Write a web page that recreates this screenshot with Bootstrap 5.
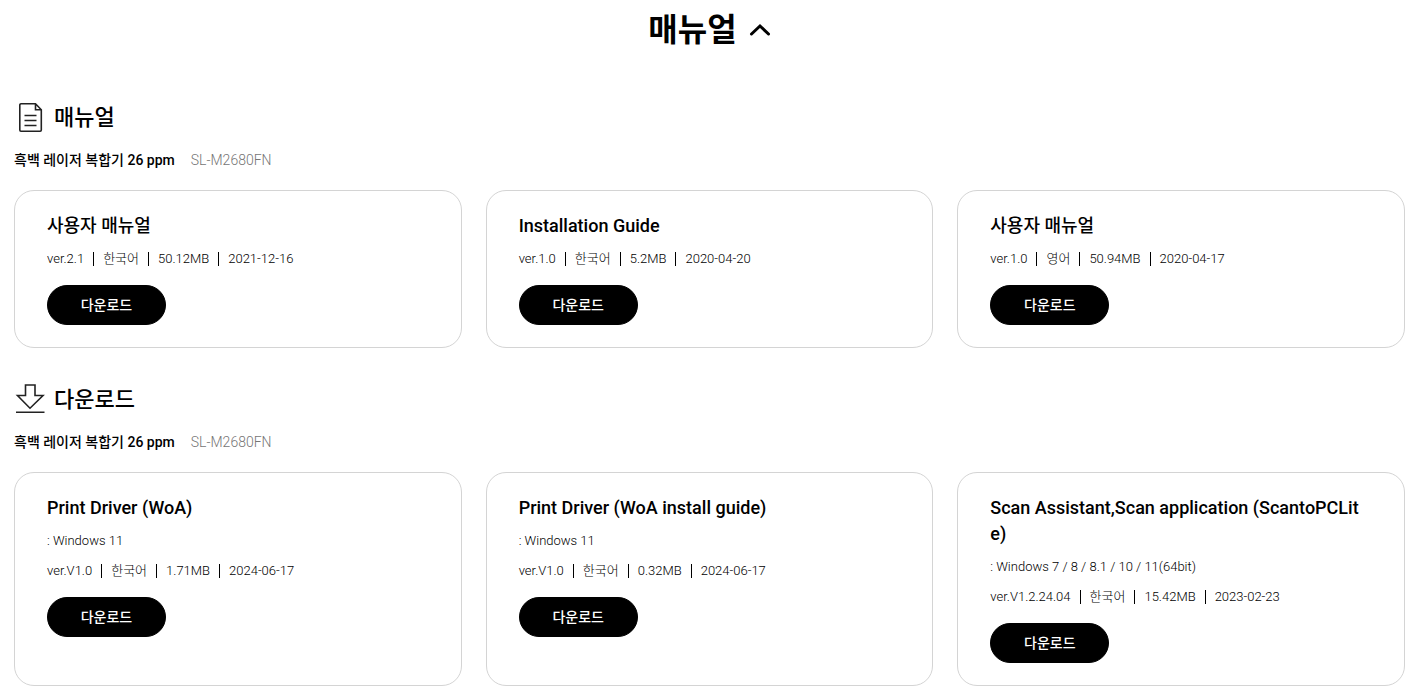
<!DOCTYPE html>
<html lang="ko">
<head>
<meta charset="utf-8">
<meta name="viewport" content="width=device-width, initial-scale=1">
<title>매뉴얼</title>
<link href="https://cdn.jsdelivr.net/npm/bootstrap@5.3.0/dist/css/bootstrap.min.css" rel="stylesheet">
<style>
  body { font-family: Roboto, "Noto Sans CJK KR", sans-serif; color: #000; font-size: 14px; line-height: 20px; }
  .support { padding: 4px 16px 12px 14px; }
  .fold-toggle { font-size: 32px; line-height: 44px; gap: 12px; }
  .manuals { margin-top: 50px; }
  .downloads { margin-top: 36px; }
  .section-title { font-size: 22px; line-height: 32px; font-weight: 500; }
  .product { font-size: 14px; line-height: 20px; margin: 16px 0 20px; }
  .product strong { font-weight: 500; }
  .product span { color: #757575; font-weight: 300; }
  .file-card { border: 1px solid #d4d4d4; border-radius: 20px; padding: 22px 32px; }
  .file-name { font-size: 18px; line-height: 26px; font-weight: 500; word-break: break-all; }
  .file-line { font-size: 13px; line-height: 20px; font-weight: 300; margin: 10px 0 0; }
  .file-line li + li { border-left: 1px solid #000; margin-left: 9px; padding-left: 9px; line-height: 14px; }
  .btn-download { --bs-btn-font-size: 14px; --bs-btn-font-weight: 500; --bs-btn-line-height: 20px;
    --bs-btn-padding-x: 32px; --bs-btn-padding-y: 9px;
    --bs-btn-color: #fff; --bs-btn-bg: #000; --bs-btn-border-color: #000;
    --bs-btn-hover-color: #fff; --bs-btn-hover-bg: #333; min-width: 119px; margin-top: 16px; }
</style>
</head>
<body>
<main class="support">
  <h1 class="text-center m-0">
    <button type="button" class="fold-toggle btn border-0 p-0 fw-bold d-inline-flex align-items-center text-black" aria-expanded="true">매뉴얼
      <svg width="22" height="14" viewBox="0 0 22 14" fill="none" stroke="#000" stroke-width="3" stroke-linecap="round" aria-hidden="true"><path d="M2.500 11 11 3l8.500 8"/></svg>
    </button>
  </h1>

  <section class="manuals">
    <h2 class="section-title d-flex align-items-center gap-2 m-0">
      <svg width="32" height="32" viewBox="0 0 32 32" fill="none" stroke="#222" stroke-width="1.6" aria-hidden="true"><path d="M7 1.800h14.500l5.800 6V28a1.200 1.200 0 0 1-1.200 1.200H7A1.200 1.200 0 0 1 5.800 28V3A1.200 1.200 0 0 1 7 1.800zM21.500 1.800v6h6M10.500 13.500h12M10.500 18.500h12M10.500 23.500h12"/></svg>
      매뉴얼
    </h2>
    <p class="product d-flex gap-3"><strong>흑백 레이저 복합기 26 ppm</strong><span>SL-M2680FN</span></p>
    <div class="row gx-4">
      <div class="col-4"><article class="file-card h-100">
        <h3 class="file-name m-0">사용자 매뉴얼</h3>
        <ul class="file-line list-unstyled d-flex align-items-center"><li>ver.2.1</li><li>한국어</li><li>50.12MB</li><li>2021-12-16</li></ul>
        <button type="button" class="btn btn-download rounded-pill">다운로드</button>
      </article></div>
      <div class="col-4"><article class="file-card h-100">
        <h3 class="file-name m-0">Installation Guide</h3>
        <ul class="file-line list-unstyled d-flex align-items-center"><li>ver.1.0</li><li>한국어</li><li>5.2MB</li><li>2020-04-20</li></ul>
        <button type="button" class="btn btn-download rounded-pill">다운로드</button>
      </article></div>
      <div class="col-4"><article class="file-card h-100">
        <h3 class="file-name m-0">사용자 매뉴얼</h3>
        <ul class="file-line list-unstyled d-flex align-items-center"><li>ver.1.0</li><li>영어</li><li>50.94MB</li><li>2020-04-17</li></ul>
        <button type="button" class="btn btn-download rounded-pill">다운로드</button>
      </article></div>
    </div>
  </section>

  <section class="downloads">
    <h2 class="section-title d-flex align-items-center gap-2 m-0">
      <svg width="32" height="32" viewBox="0 0 32 32" fill="none" stroke="#222" stroke-width="1.6" aria-hidden="true"><path d="M11.500 1h9.500v10.500h8L16 24.200 3.500 11.500h8zM2 28.200h28.500"/></svg>
      다운로드
    </h2>
    <p class="product d-flex gap-3"><strong>흑백 레이저 복합기 26 ppm</strong><span>SL-M2680FN</span></p>
    <div class="row gx-4">
      <div class="col-4"><article class="file-card h-100">
        <h3 class="file-name m-0">Print Driver (WoA)</h3>
        <p class="file-line">: Windows 11</p>
        <ul class="file-line list-unstyled d-flex align-items-center"><li>ver.V1.0</li><li>한국어</li><li>1.71MB</li><li>2024-06-17</li></ul>
        <button type="button" class="btn btn-download rounded-pill">다운로드</button>
      </article></div>
      <div class="col-4"><article class="file-card h-100">
        <h3 class="file-name m-0">Print Driver (WoA install guide)</h3>
        <p class="file-line">: Windows 11</p>
        <ul class="file-line list-unstyled d-flex align-items-center"><li>ver.V1.0</li><li>한국어</li><li>0.32MB</li><li>2024-06-17</li></ul>
        <button type="button" class="btn btn-download rounded-pill">다운로드</button>
      </article></div>
      <div class="col-4"><article class="file-card h-100">
        <h3 class="file-name m-0">Scan Assistant,Scan application (ScantoPCLite)</h3>
        <p class="file-line">: Windows 7 / 8 / 8.1 / 10 / 11(64bit)</p>
        <ul class="file-line list-unstyled d-flex align-items-center"><li>ver.V1.2.24.04</li><li>한국어</li><li>15.42MB</li><li>2023-02-23</li></ul>
        <button type="button" class="btn btn-download rounded-pill">다운로드</button>
      </article></div>
    </div>
  </section>
</main>
<script src="https://cdn.jsdelivr.net/npm/bootstrap@5.3.0/dist/js/bootstrap.bundle.min.js"></script>
</body>
</html>
